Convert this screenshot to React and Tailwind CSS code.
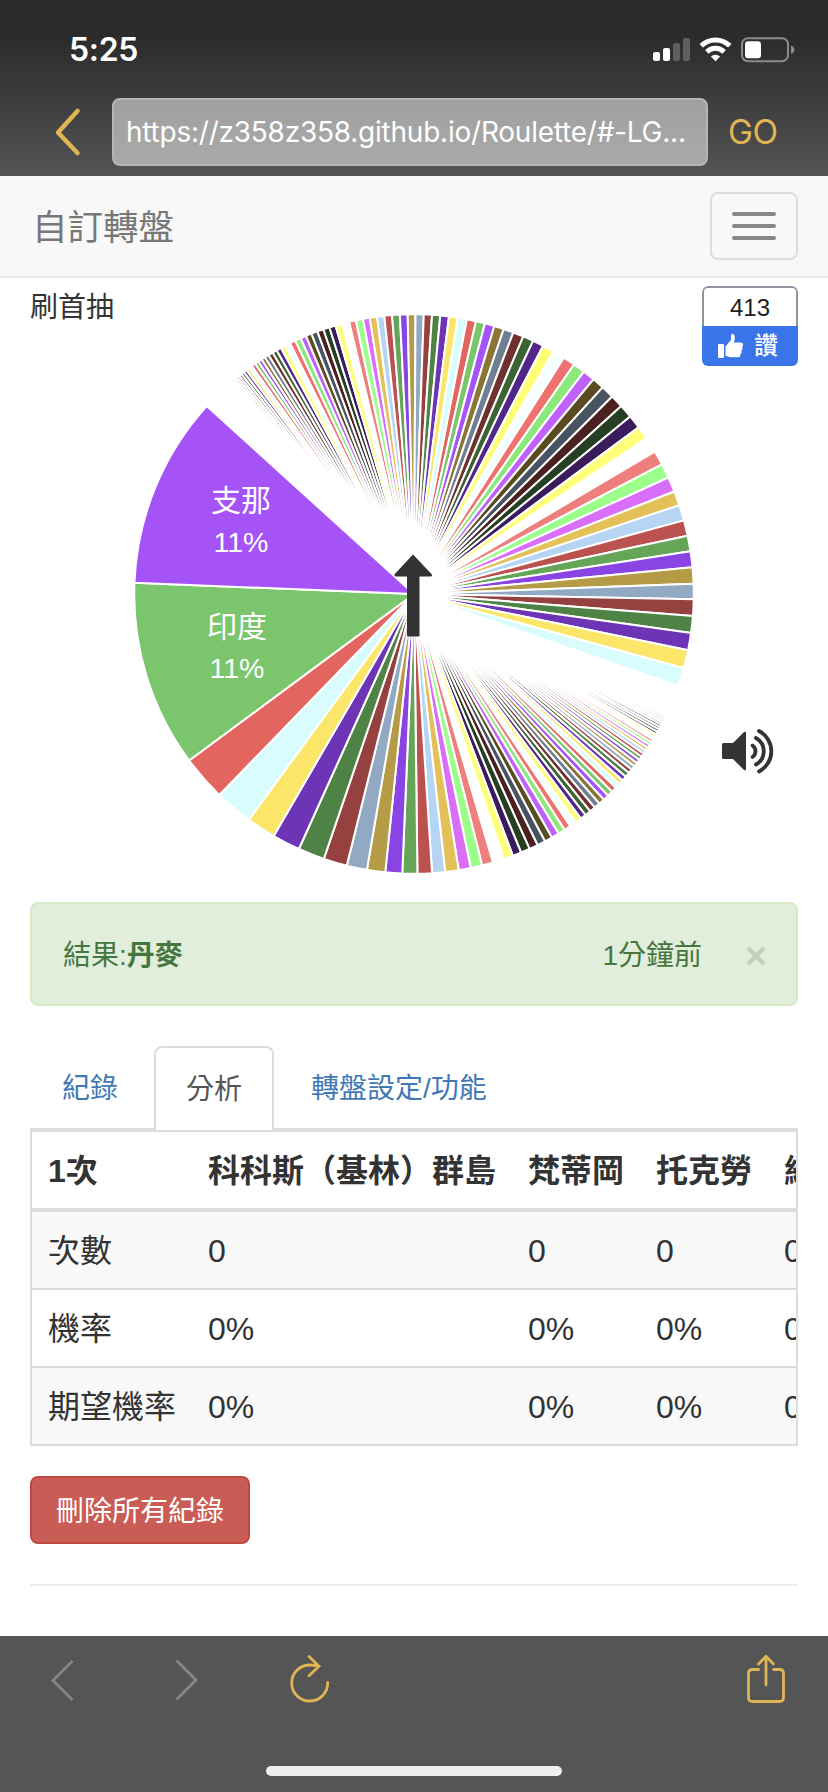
import React from "react";

const PALETTE = [
  "#a552f6", "#7bc66c", "#e2655f", "#d9fdfe", "#fbe66a",
  "#6d35b5", "#4f8345", "#95413f", "#92a9c4", "#b59b46",
  "#8944e3", "#64a558", "#bb524f", "#b5d5f3", "#e4c158",
  "#d96ef9", "#9dff8b", "#ee7f7d", "#ffffff", "#ffff7c",
  "#3a1b5b", "#263f22", "#4a2020", "#485462", "#5a4c20",
  "#c061fa", "#8de87c", "#ef726e", "#f6ffff", "#ffff76",
  "#512788", "#3c6334", "#6f312f", "#6f7f92", "#8a7436",
];

// slice edges in degrees, going counter-clockwise around the wheel
const LOWER_EDGES = [
  222.2, 182.3, 143.5, 134.1, 126.2, 120.1, 114.3, 108.8, 103.9, 99.7, 95.9,
  92.4, 89.3, 86.3, 83.6, 80.8, 78.3, 75.9, 73.6, 71.3, 69.3, 67.5, 65.6, 63.8,
  62.1, 60.5, 58.9, 57.45, 56.05, 54.7, 53.4, 52.2, 50.95, 49.75, 48.5, 47.3,
  46.1, 44.95, 43.85, 42.8, 41.8, 40.8, 39.8,
];
const UPPER_EDGES = [
  19.2, 15.4, 11.6, 8, 4.5, 1.1, -2.1, -5.5, -8.8, -12, -15.25, -18.5, -21.5,
  -24.6, -27.6, -30.6, -33.8, -36.6, -39.4, -42.2, -44.9, -47.6, -50.1, -52.6,
  -55.1, -57.6, -60.1, -62.5, -64.8, -67, -69.2, -71.3, -73.3, -75.3, -77.2,
  -79.1, -81, -82.8, -84.6, -86.3, -88, -89.7, -91.3, -92.9, -94.5, -96.1,
  -97.6, -99.1, -100.5, -102, -103.4, -104.9, -106.3, -107.6, -108.9, -110.2,
  -111.5, -112.7, -113.9, -115.1, -116.3, -117.4, -118.4, -119.4, -120.35,
  -121.3, -122.2, -123, -123.8, -124.6, -125.4, -126.1, -126.8,
];

const extend = (edges, width, ratio, limit) => {
  const out = [...edges];
  let next = out[out.length - 1] - width;
  while (next > limit && width > 0.1) {
    out.push(next);
    width *= ratio;
    next -= width;
  }
  return out;
};

const toSlices = (edges, offset) =>
  edges.slice(0, -1).map((from, i) => ({
    from,
    to: edges[i + 1],
    color: PALETTE[(i + offset) % PALETTE.length],
  }));

const slices = [
  ...toSlices(extend(LOWER_EDGES, 0.9, 0.968, 19.2), 0),
  ...toSlices(extend(UPPER_EDGES, 0.68, 0.925, -137.8), 3),
].reverse();

const C = 279;
const R = 279.8;

const slicePath = ({ from, to }) => {
  const point = (deg) => {
    const rad = (deg * Math.PI) / 180;
    return `${(C + R * Math.cos(rad)).toFixed(2)} ${(C + R * Math.sin(rad)).toFixed(2)}`;
  };
  return `M${C} ${C}L${point(from)}A${R} ${R} 0 0 0 ${point(to)}Z`;
};

const columns = ["科科斯（基林）群島", "梵蒂岡", "托克勞", "維爾京群島"];
const rows = [
  { label: "次數", value: "0" },
  { label: "機率", value: "0%" },
  { label: "期望機率", value: "0%" },
];

const StatusBar = () => (
  <div className="flex h-[98px] justify-between pl-[69px] pr-[33px]">
    <span className="mt-[30px] font-[Inter] text-[32px] leading-10 font-semibold tracking-[-0.3px] text-white">
      5:25
    </span>
    <svg className="mt-[34px] h-8 w-[142px]" viewBox="653 34 142 32">
      <rect x="653" y="52" width="7" height="9" rx="2" fill="#fff" />
      <rect x="663" y="48" width="7" height="13" rx="2" fill="#fff" />
      <rect x="673" y="43" width="7" height="18" rx="2" fill="#5f5f5f" />
      <rect x="683" y="38" width="7" height="23" rx="2" fill="#5f5f5f" />
      <g fill="none" stroke="#fff" strokeWidth="5">
        <path d="M701.2 45.8a20.3 20.3 0 0 1 28.6 0" />
        <path d="M706.9 51.9a12.2 12.2 0 0 1 17.2 0" />
      </g>
      <path d="M715.5 61.2l-4.6-4.6a6.5 6.5 0 0 1 9.2 0z" fill="#fff" />
      <rect x="742" y="38.2" width="46" height="23" rx="6" fill="none" stroke="#8b8b8b" strokeWidth="2" />
      <rect x="745" y="41.2" width="16" height="17" rx="3" fill="#fff" />
      <path d="M791 45.5q3.4 1.2 3.4 4.2t-3.4 4.2z" fill="#8b8b8b" />
    </svg>
  </div>
);

const AddressBar = () => (
  <div className="flex h-[68px] items-center">
    <div className="flex w-28 justify-center pr-[2px] pl-[26px]">
      <svg className="h-[50px] w-7" viewBox="0 0 28 50" fill="none" stroke="#dfb555" strokeWidth="4.5" strokeLinecap="round" strokeLinejoin="round">
        <path d="M23.500 4L4 25.500l19.500 20.500" />
      </svg>
    </div>
    <div className="flex h-[68px] w-[596px] items-center rounded-lg border-2 border-[#b6b6b6] bg-linear-to-b from-[#a0a0a0] to-[#a9a9a9] pl-3">
      <span className="font-[Inter] text-[28px] tracking-[-0.23px] whitespace-nowrap text-white">
        https://z358z358.github.io/Roulette/#-LG...
      </span>
    </div>
    <span className="ml-[20px] font-[Inter] text-[33.5px] tracking-[-0.5px] text-[#dfb555]">
      GO
    </span>
  </div>
);

const Navbar = () => (
  <nav className="flex h-[102px] items-center justify-between border-b-2 border-[#e7e7e7] bg-[#f8f8f8] pr-[30px] pl-8">
    <span className="pt-1 text-[35.5px] leading-10 text-[#777]">自訂轉盤</span>
    <button className="flex h-[68px] w-[88px] flex-col items-center justify-center gap-2 rounded-lg border-2 border-[#ddd]">
      <span className="h-1 w-11 rounded-xs bg-[#888]" />
      <span className="h-1 w-11 rounded-xs bg-[#888]" />
      <span className="h-1 w-11 rounded-xs bg-[#888]" />
    </button>
  </nav>
);

const Wheel = () => (
  <svg className="h-[558px] w-[558px] shrink-0 overflow-visible" viewBox="0 0 558 558">
    <g stroke="#fff" strokeWidth="2" strokeLinejoin="bevel">
      {slices.map((slice) => (
        <path key={slice.from} d={slicePath(slice)} fill={slice.color} />
      ))}
    </g>
    <g fill="#fff" fontSize="30" textAnchor="middle">
      <text x="106" y="196">支那</text>
      <text x="106" y="237" fontSize="28.500">11%</text>
      <text x="102" y="322">印度</text>
      <text x="102" y="363" fontSize="28.500">11%</text>
    </g>
    <path
      d="M278 239.500L259.800 259q-1 2 1 2.500H272v59q0 1 1 1h10.500q1 0 1-1v-59H295.500q2.500-.5 1-2.500z"
      fill="#333"
    />
  </svg>
);

const LikeBadge = () => (
  <div className="mt-2 h-20 w-24 overflow-hidden rounded-[6px]">
    <div className="flex h-10 items-center justify-center rounded-t-[6px] border-2 border-b-0 border-[#8f93a0] pt-0.5 text-[24px] text-[#1c1e21]">
      413
    </div>
    <div className="flex h-10 items-center bg-[#3975e8] pl-4">
      <svg className="h-[26px] w-[26px]" viewBox="0 0 26 26" fill="#fff">
        <rect x="0" y="11" width="6" height="14" rx="1.200" />
        <path d="M7.500 13.500L13 7V2.500C13 0 16.500 0 16.800 4c.1 2-.5 4-1 5.500h7c2.700 0 3 3.500 1.200 4.300 1.200 1.200.8 3.200-.7 3.700.8 1.300.3 3-1 3.400.6 1.800-.4 3.300-2.300 3.300h-7.500c-2 0-3-1.200-5-1.200z" />
      </svg>
      <span className="ml-[10px] text-[24px] leading-none font-medium text-white">
        讚
      </span>
    </div>
  </div>
);

const SpeakerIcon = () => (
  <svg className="mr-[21px] mb-[97px] h-[50px] w-[56px]" viewBox="720 726 56 50">
    <path d="M722.500 743H732L743 732q2-1 2 1v36q0 2-2 1l-11-11h-9.500q-1.500 0-1.500-1.500v-13q0-1.500 1.500-1.500z" fill="#333" />
    <g fill="none" stroke="#333" strokeWidth="3.800" strokeLinecap="round">
      <path d="M751.500 745.500a7 7 0 0 1 0 11.500" />
      <path d="M755 738a15.200 15.200 0 0 1 0 26.500" />
      <path d="M758 731a22.800 22.800 0 0 1 0 40.500" />
    </g>
  </svg>
);

const ResultAlert = () => (
  <div className="mt-[29px] flex h-[104px] items-center rounded-lg border-2 border-[#d6e9c6] bg-[#e1eedb] px-[31px] pt-1 text-[28px] text-[#45763f]">
    <span>
      結果:<b>丹麥</b>
    </span>
    <span className="ml-auto">1分鐘前</span>
    <svg className="ml-[45px] h-[18px] w-[18px]" viewBox="0 0 18 18" stroke="#c2d3bc" strokeWidth="4.500">
      <path d="M1 1l16 16M17 1L1 17" />
    </svg>
  </div>
);

const Tabs = () => (
  <div className="mt-10 flex h-[84px] border-b-2 border-[#ddd] text-[28px] text-[#4279b5]">
    <div className="flex w-[124px] items-center pt-1 pl-8">紀錄</div>
    <div className="-mb-0.5 flex w-[120px] items-center justify-center rounded-t-lg border-2 border-b-0 border-[#ddd] bg-white text-[#555]">
      <span className="pt-0.5">分析</span>
    </div>
    <div className="ml-[37px] flex items-center pt-1 whitespace-nowrap">
      轉盤設定/功能
    </div>
  </div>
);

const Analysis = () => (
  <div className="h-[316px] overflow-hidden border-2 border-[#ddd]">
    <table className="border-collapse text-left text-[32px] leading-11 whitespace-nowrap">
      <thead>
        <tr className="h-[78px] border-b-4 border-[#ddd]">
          <th className="w-40 min-w-40 px-4 pt-0.5 pb-0">1次</th>
          {columns.map((name) => (
            <th key={name} className="px-4 pt-0.5 pb-0">
              {name}
            </th>
          ))}
        </tr>
      </thead>
      <tbody>
        {rows.map((row) => (
          <tr
            key={row.label}
            className="h-[78px] border-b-2 border-[#ddd] odd:bg-[#f9f9f9] first:h-[79px]"
          >
            <td className="px-4 pt-0.5 pb-0">{row.label}</td>
            {columns.map((name) => (
              <td key={name} className="px-4 pt-0.5 pb-0">
                {row.value}
              </td>
            ))}
          </tr>
        ))}
      </tbody>
    </table>
  </div>
);

const Toolbar = () => (
  <footer className="flex h-[156px] flex-col items-center justify-between bg-[#555] pb-4">
    <div className="flex h-[88px] w-full items-center pr-[42px] pl-[50px]">
      <svg className="h-11 w-6" viewBox="0 0 24 44" fill="none" stroke="#868686" strokeWidth="2.800">
        <path d="M22.500 3L3 22.500 22.500 42" />
      </svg>
      <svg className="ml-[101px] h-11 w-6" viewBox="0 0 24 44" fill="none" stroke="#868686" strokeWidth="2.800">
        <path d="M1.500 2.500L21 22 1.500 41.500" />
      </svg>
      <svg className="ml-[90px] h-[52px] w-[42px]" viewBox="289 1652 42 52" fill="none" stroke="#dfb555" strokeWidth="2.800" strokeLinecap="round">
        <path d="M327.700 1680.500a18 18 0 1 1-18-17.500q4.500 0 8.500 1M309 1654.500l10 9.700-10 9.500" />
      </svg>
      <svg className="ml-auto h-[52px] w-10" viewBox="745 1654 40 52" fill="none" stroke="#dfb555" strokeWidth="2.800" strokeLinecap="round" strokeLinejoin="round">
        <path d="M757.500 1669.500h-6q-4 0-4 4v24q0 4 4 4h27q4 0 4-4v-24q0-4-4-4h-6" />
        <path d="M765 1685v-28.500M757.500 1664l7.500-7.700 7.500 7.700" />
      </svg>
    </div>
    <div className="h-2.5 w-[296px] rounded-full bg-[#eee]" />
  </footer>
);

const App = () => {
  return (
    <div className="h-[1792px] w-[828px] overflow-hidden bg-white font-['Liberation_Sans','Noto_Sans_CJK_TC',sans-serif] text-[#333]">
      <header className="h-44 bg-linear-to-b from-[#2b2b2b] from-20% to-[#545454]">
        <StatusBar />
        <AddressBar />
      </header>
      <Navbar />
      <main className="h-[1358px] px-[30px]">
        <div className="flex h-[595px]">
          <div className="w-[105px] shrink-0 pt-[9px] text-[28px] leading-[42px]">
            刷首抽
          </div>
          <div className="pt-[37px]">
            <Wheel />
          </div>
          <div className="flex w-[105px] shrink-0 flex-col items-end justify-between">
            <LikeBadge />
            <SpeakerIcon />
          </div>
        </div>
        <ResultAlert />
        <Tabs />
        <Analysis />
        <button className="mt-[30px] block h-[68px] w-[220px] rounded-lg border-2 border-[#c04a42] bg-[#c95c54] pt-1 text-[28px] leading-none text-white">
          刪除所有紀錄
        </button>
        <hr className="mt-10 border-t-2 border-[#eee]" />
      </main>
      <Toolbar />
    </div>
  );
};

export default App;
